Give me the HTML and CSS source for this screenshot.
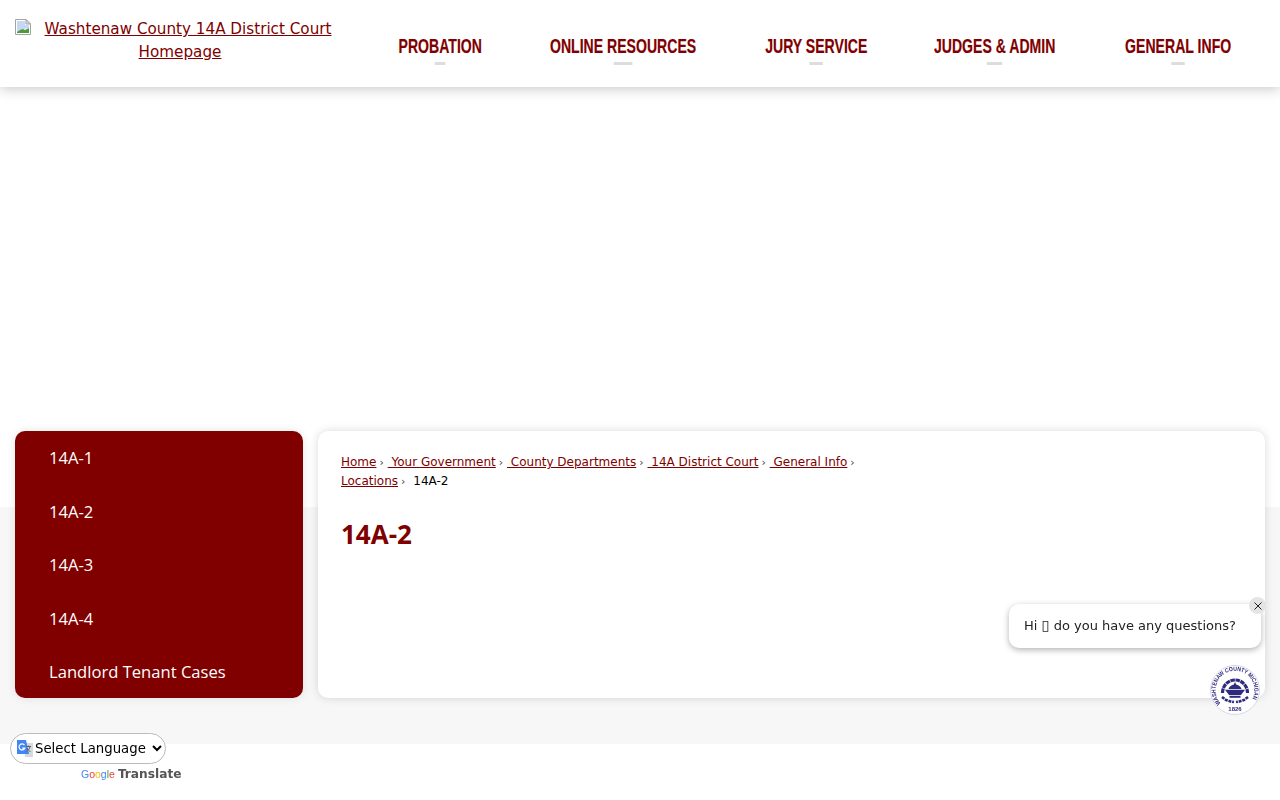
FILE: index.html
```html
<!DOCTYPE html>
<html lang="en">
<head>
    <meta charset="UTF-8">
    <meta name="viewport" content="width=device-width, initial-scale=1.0">
    <title>14A-2 | Washtenaw County 14A District Court</title>
    <link rel="stylesheet" href="styles.css">
</head>
<body>
    <header class="site-header">
        <a class="logo" href="#home"><svg class="broken-img" width="16" height="16" viewBox="0 0 16 16">
                <path d="M.5.5h10.500l4.500 4.500v10.500h-15z" fill="#fff" stroke="#a3a3a3"/>
                <path d="M11 .5v4.500h4.500z" fill="#d8d8d8" stroke="#a3a3a3"/>
                <path d="M2 2h8v4h4v3l-5 1-4 2-3 1z" fill="#c6d6f4"/>
                <path d="M2 14v-1l3-2 3-1 2 1 4-2v5z" fill="#4f9a3c"/>
            </svg>Washtenaw County 14A District Court Homepage</a>
        <nav class="main-nav">
            <a href="#probation"><span>PROBATION</span></a>
            <a href="#online"><span>ONLINE RESOURCES</span></a>
            <a href="#jury"><span>JURY SERVICE</span></a>
            <a href="#judges"><span>JUDGES &amp; ADMIN</span></a>
            <a href="#info"><span>GENERAL INFO</span></a>
        </nav>
    </header>

    <div class="hero"></div>

    <div class="band">
        <div class="content">
            <ul class="side-menu">
                <li><a href="#a1">14A-1</a></li>
                <li><a href="#a2">14A-2</a></li>
                <li><a href="#a3">14A-3</a></li>
                <li><a href="#a4">14A-4</a></li>
                <li><a href="#landlord">Landlord Tenant Cases</a></li>
            </ul>
            <main class="main-card">
                <div class="breadcrumbs">
                    <a href="#home">Home</a><span class="sep">›</span>
                    <a href="#gov">&nbsp;Your Government</a><span class="sep">›</span>
                    <a href="#dept">&nbsp;County Departments</a><span class="sep">›</span>
                    <a href="#court">&nbsp;14A District Court</a><span class="sep">›</span>
                    <a href="#info">&nbsp;General Info</a><span class="sep">›</span>
                    <a href="#locations">Locations</a><span class="sep">›</span>
                    <span class="current">14A-2</span>
                </div>
                <h1>14A-2</h1>
            </main>
        </div>
    </div>

    <div class="chat-bubble">
        Hi <span class="tofu">▯</span> do you have any questions?
        <button class="chat-close" aria-label="Close">
            <svg width="8" height="8" viewBox="0 0 8 8"><path d="M.5.5l7 7M7.500.5l-7 7" stroke="#222" stroke-width="1" fill="none"/></svg>
        </button>
    </div>

    <svg class="seal" width="50" height="50" viewBox="0 0 50 50">
        <defs>
            <path id="sealTop" d="M10.800 38.300a19.400 19.400 0 1 1 28.400 0"/>
        </defs>
        <circle cx="25" cy="25" r="24.500" fill="#fff" stroke="#d8d6ea"/>
        <text class="seal-text"><textPath href="#sealTop" textLength="84" lengthAdjust="spacingAndGlyphs">WASHTENAW COUNTY MICHIGAN</textPath></text>
        <text class="seal-year" x="25" y="46" text-anchor="middle">1826</text>
        <!-- gear ring and lamp -->
        <path d="M12.500 28a12.500 13 0 0 1 25 0" fill="none" stroke="#2f2a7c" stroke-width="3.200" stroke-dasharray="4.500 .6"/>
        <path d="M12 32l4 3 4.500 1.500 3.500.5M38 32l-4 3-4.500 1.500-3.500.5" fill="none" stroke="#2f2a7c" stroke-width="2.600" stroke-dasharray="3 .8"/>
        <path d="M25 17l1.200 2.500c2.800.5 4.800 2.500 5.300 4.500h-13c.5-2 2.500-4 5.300-4.500z" fill="#2f2a7c"/>
        <path d="M15 24.800h20l-4 5.200h-12z" fill="#2f2a7c"/>
        <path d="M19.500 30.800h11v2h-11z" fill="#2f2a7c"/>
    </svg>

    <div class="translate">
        <div class="translate-box">
            <svg class="translate-icon" width="18" height="18" viewBox="0 0 18 18">
                <path d="M7 3h10v14H9z" fill="#d6d9de"/>
                <path d="M1 0h9l3 14H1z" fill="#4285f4"/>
                <path d="M10 6.500h5M12.500 5.500v1M14 6.500c-.5 2.500-2 4-3.500 5M11 8c.5 1.500 2 3 3.500 3.500" stroke="#5f6368" stroke-width="1" fill="none"/>
                <path d="M8.500 5.200a3 3 0 1 0 .3 3h-2.600" stroke="#fff" stroke-width="1.200" fill="none"/>
            </svg>
            <select class="lang-select">
                <option>Select Language</option>
            </select>
        </div>
        <div class="powered">
            <span class="google"><span class="g-blue">G</span><span class="g-red">o</span><span class="g-yellow">o</span><span class="g-blue">g</span><span class="g-green">l</span><span class="g-red">e</span></span>
            <span class="translate-word">Translate</span>
        </div>
    </div>
</body>
</html>
```

FILE: styles.css
```css
body {
    font-family: "DejaVu Sans", sans-serif;
    background-color: #fff;
    color: #000;
    margin: 0;
    padding: 0;
}
a {
    color: #800000;
}

/* header */
.site-header {
    display: flex;
    height: 87px;
    background-color: #fff;
    box-shadow: 0 2px 12px rgba(0, 0, 0, 0.22);
    position: relative;
}
.logo {
    width: 330px;
    height: 46px;
    margin: 18px 0 0 15px;
    font-size: 15.200px;
    line-height: 23px;
    text-align: center;
}
.broken-img {
    vertical-align: -1px;
    margin-left: -14px;
    margin-right: 14px;
}
.main-nav {
    display: grid;
    grid-template-columns: 152px 214px 172px 186px 180px;
    margin-left: 19px;
}
.main-nav a {
    display: flex;
    justify-content: center;
    height: 87px;
    white-space: nowrap;
    text-decoration: none;
}
/* no condensed font here, so the bold sans is squeezed */
.main-nav span {
    position: relative;
    height: 87px;
    font-family: "Liberation Sans", sans-serif;
    font-size: 21px;
    font-weight: 700;
    line-height: 92px;
    color: #800000;
    transform: scaleX(0.67);
    -webkit-text-stroke: 0.2px #800000;
}
.main-nav span::after {
    content: "";
    position: absolute;
    left: 43.500%;
    top: 62px;
    width: 13%;
    height: 3px;
    background-color: #ddd;
}

.hero {
    height: 420px;
}

/* content */
.band {
    height: 237px;
    background-color: #f7f7f7;
}
.content {
    display: flex;
    gap: 15px;
    padding: 0 15px;
    position: relative;
    top: -76px;
}
.side-menu {
    list-style: none;
    width: 288px;
    height: 267px;
    margin: 0;
    padding: 0;
    background-color: #800000;
    border-radius: 10px;
    box-shadow: 0 0 10px rgba(0, 0, 0, 0.1);
    flex-shrink: 0;
}
.side-menu li {
    height: 53.500px;
}
.side-menu a {
    display: block;
    padding-left: 34px;
    font-family: "Open Sans", sans-serif;
    font-size: 16.600px;
    line-height: 53px;
    color: #fff;
    text-decoration: none;
}
.main-card {
    flex: 1;
    height: 267px;
    box-sizing: border-box;
    padding: 22px 23px;
    background-color: #fff;
    border-radius: 10px;
    box-shadow: 0 0 10px rgba(0, 0, 0, 0.15);
}
.breadcrumbs {
    max-width: 530px;
    font-size: 12px;
    line-height: 19px;
}
.sep {
    margin-left: 3px;
    font-size: 11px;
    color: #444;
}
.current {
    margin-left: 4px;
}
h1 {
    margin: 25px 0 0;
    font-family: "Open Sans", sans-serif;
    font-size: 26px;
    line-height: 37px;
    font-weight: 700;
    color: #800000;
}

/* chat widget */
.chat-bubble {
    position: fixed;
    left: 1009px;
    top: 604px;
    box-sizing: border-box;
    width: 252px;
    height: 44px;
    padding-left: 15px;
    font-size: 13px;
    line-height: 43px;
    color: #222;
    background-color: #fff;
    border-radius: 10px;
    box-shadow: 0 2px 6px rgba(0, 0, 0, 0.3);
}
.tofu {
    font-size: 14.500px;
    line-height: 1;
}
.chat-close {
    position: absolute;
    right: -5px;
    top: -7px;
    display: flex;
    align-items: center;
    justify-content: center;
    width: 17px;
    height: 17px;
    padding: 0;
    border: none;
    border-radius: 50%;
    background-color: #e4e4e4;
}
.seal {
    position: fixed;
    left: 1210px;
    top: 665px;
}
.seal-text {
    font-family: "Liberation Sans", sans-serif;
    font-size: 6px;
    font-weight: 700;
    fill: #2f2a7c;
}
.seal-year {
    font-family: "Liberation Sans", sans-serif;
    font-size: 6px;
    font-weight: 700;
    fill: #2f2a7c;
}

/* translate widget */
.translate {
    position: fixed;
    left: 10px;
    top: 733px;
}
.translate-box {
    position: relative;
    box-sizing: border-box;
    width: 156px;
    height: 31px;
    border: 1px solid #bbb;
    border-radius: 16px;
    background-color: #fff;
}
.translate-icon {
    position: absolute;
    left: 5px;
    top: 6px;
}
.lang-select {
    position: absolute;
    left: 20px;
    top: 3px;
    width: 134px;
    height: 22px;
    padding: 0;
    border: none;
    background: transparent;
    font-family: "DejaVu Sans", sans-serif;
    font-size: 13.300px;
    color: #000;
}
.powered {
    display: flex;
    align-items: center;
    margin: 3px 0 0 71px;
    white-space: nowrap;
    line-height: 15px;
}
.google {
    font-family: "Liberation Sans", sans-serif;
    font-size: 10.500px;
    margin-right: 3px;
}
.translate-word {
    font-size: 12.200px;
    font-weight: 700;
    color: #555;
}
.g-blue { color: #4285f4; }
.g-red { color: #ea4335; }
.g-yellow { color: #fbbc05; }
.g-green { color: #34a853; }
```
